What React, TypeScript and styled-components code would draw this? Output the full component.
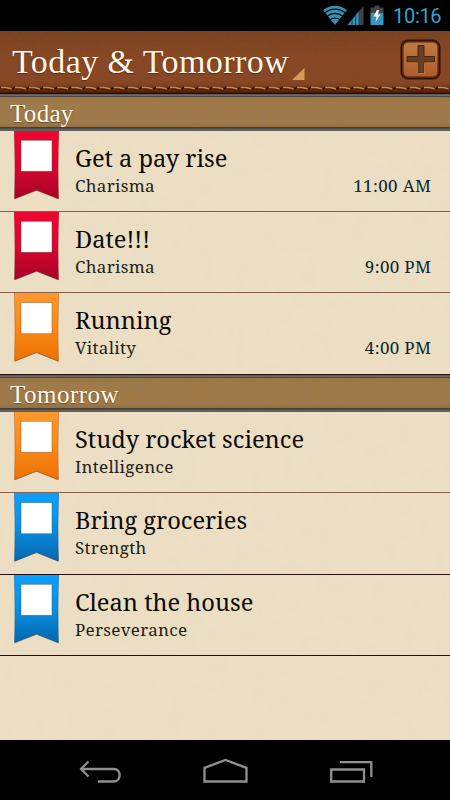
import React from "react";
import styled, { createGlobalStyle } from "styled-components";

const GlobalStyle = createGlobalStyle`
  * { box-sizing: border-box; }
  html, body { margin: 0; background: #000; }
`;

const Screen = styled.div`
  width: 450px;
  height: 800px;
  display: flex;
  flex-direction: column;
  overflow: hidden;
  background: #000;
  font-family: "Droid Serif", "Noto Serif", "Liberation Serif", serif;
`;

const StatusBar = styled.div`
  height: 31px;
  flex: none;
  display: flex;
  justify-content: flex-end;
  background: #000;
`;

const StatusIcons = styled.svg`
  width: 70px;
  height: 31px;
  flex: none;
`;

const Clock = styled.span`
  width: 57px;
  font: 400 20px/32px Roboto, sans-serif;
  letter-spacing: -0.3px;
  color: #35a4cc;
  white-space: nowrap;
`;

const Header = styled.header`
  position: relative;
  height: 63px;
  flex: none;
  background: linear-gradient(#7c4220, #884722 40%, #884622 80%, #703416);
`;

const HeaderContent = styled.div`
  position: relative;
  display: flex;
  align-items: flex-start;
  padding: 0 9px 0 12px;
  height: 54px;
`;

const Title = styled.h1`
  margin: 0;
  padding-top: 1px;
  font: 400 34px/60px "Liberation Serif", serif;
  letter-spacing: 0.42px;
  color: #fff6e8;
  white-space: nowrap;
  text-shadow: 0 1px 1px rgba(50, 15, 0, 0.5);
`;

const SpinnerMark = styled.svg`
  width: 13px;
  height: 13px;
  margin: 37px auto 0 3px;
`;

const AddButton = styled.button`
  width: 41px;
  height: 41px;
  margin-top: 8px;
  padding: 0;
  border: 0;
  background: none;
  svg { display: block; }
`;

const Stitching = styled.svg`
  position: relative;
  display: block;
  width: 450px;
  height: 9px;
`;

const Grain = styled.svg`
  position: absolute;
  inset: 0;
  width: 100%;
  height: 100%;
`;

const SectionBar = styled.div`
  position: relative;
  height: 37px;
  flex: none;
  padding: 3px 0 4px;
  background: linear-gradient(#4b4340, #77706c 1px, #6c6460 2px, #2f2822 3px, #4a3c2b 33px, #42403f 34px, #6f6e6c 36px, #54504a);
`;

const SectionFace = styled.div`
  position: relative;
  height: 30px;
  padding-left: 10px;
  background: linear-gradient(#997544, #a07a46 20%, #a17946 85%, #936f3d);
  overflow: hidden;
`;

const SectionTitle = styled.h2<{ $spacing: number }>`
  position: relative;
  margin: 0;
  font: 400 25px/33px "Liberation Serif", serif;
  letter-spacing: ${p => p.$spacing}px;
  color: #fffaf0;
  text-shadow: 0 1px 1px rgba(50, 30, 0, 0.5);
`;

const List = styled.main`
  position: relative;
  height: 646px;
  flex: none;
  background: #ebdec3;
`;

const Row = styled.article<{ $height: number; $dark?: boolean }>`
  position: relative;
  height: ${p => p.$height}px;
  display: grid;
  grid-template-columns: 61px 1fr auto;
  padding: 0 19px 0 14px;
  border-bottom: 1px solid ${p => (p.$dark ? "#260e10" : "#84604f")};
`;

const RibbonIcon = styled.svg`
  width: 45px;
  height: 70px;
`;

const Copy = styled.div`
  display: flex;
  flex-direction: column;
  color: #0c0a08;
  white-space: nowrap;
`;

const Name = styled.div`
  margin-top: 12px;
  height: 30px;
  font-size: 23.65px;
  line-height: 31px;
`;

const Skill = styled.div`
  height: 26px;
  font-size: 17px;
  line-height: 26px;
  letter-spacing: 0.3px;
  color: #211d19;
`;

const Time = styled.time`
  margin: 42px -0.3px 0 0;
  font-size: 17px;
  line-height: 26px;
  letter-spacing: 0.35px;
  color: #0b2630;
`;

const NavBar = styled.nav`
  height: 60px;
  flex: none;
  display: flex;
  justify-content: space-between;
  padding: 18px 76px 0 78px;
  background: #000;
`;

const NavIcon = styled.svg`
  width: 46px;
  height: 28px;
  fill: none;
  stroke: #909090;
  stroke-width: 2.3;
`;

type Tone = "red" | "orange" | "blue";
const tones: Record<Tone, [string, string, string]> = {
  red: ["#ee0732", "#dc0530", "#a50325"],
  orange: ["#ff982f", "#fb8b1c", "#ec7000"],
  blue: ["#0ba0ff", "#0990e2", "#0367af"],
};

interface TextureProps {
  id: string;
  tint: string;
  fx: number;
  fy: number;
  strength: number;
}

function Texture({ id, tint, fx, fy, strength }: TextureProps) {
  return (
    <Grain aria-hidden="true">
      <filter id={id} x="0" y="0" width="100%" height="100%">
        <feTurbulence type="fractalNoise" baseFrequency={`${fx} ${fy}`} numOctaves={3} seed={4} result="n" />
        <feColorMatrix in="n" type="matrix" values={`0 0 0 0 ${tint} 0 0 0 0 ${tint} 0 0 0 0 ${tint} ${strength} 0 0 0 ${-strength * 0.45}`} />
      </filter>
      <rect width="100%" height="100%" filter={`url(#${id})`} />
    </Grain>
  );
}

function Ribbon({ tone, offset = 0 }: { tone: Tone; offset?: number }) {
  const [a, b, c] = tones[tone];
  return (
    <RibbonIcon viewBox="0 0 45 70">
      <defs>
        <linearGradient id={`ribbon-${tone}`} x1="0" y1="0" x2="0" y2="1">
          <stop stopColor={a} />
          <stop offset=".5" stopColor={b} />
          <stop offset="1" stopColor={c} />
        </linearGradient>
      </defs>
      <g transform={`translate(0 ${offset})`}>
        <path d="M0-1H45Q43.6 34 44.7 68L22.5 59.2L.3 68Q1.4 34 0-1Z" fill={`url(#ribbon-${tone})`} />
        <path d="M44.2 67.8L22.5 59.2L.8 67.8" fill="none" stroke="#4b302a" strokeOpacity=".65" strokeWidth=".8" />
        <path d="M44.6 0Q43.2 34 44.3 67M.4 0Q1.8 34 .7 67" fill="none" stroke="#5b3935" strokeOpacity=".35" strokeWidth=".7" />
        <rect x="7" y="9.3" width="31" height="31" fill="#fff" stroke="#54352e" strokeOpacity=".5" strokeWidth=".7" />
      </g>
    </RibbonIcon>
  );
}

interface Task {
  name: string;
  skill: string;
  time?: string;
  tone: Tone;
  height: number;
  dark?: boolean;
  offset?: number;
}

const today: Task[] = [
  { name: "Get a pay rise", skill: "Charisma", time: "11:00 AM", tone: "red", height: 81 },
  { name: "Date!!!", skill: "Charisma", time: "9:00 PM", tone: "red", height: 81 },
  { name: "Running", skill: "Vitality", time: "4:00 PM", tone: "orange", height: 82, dark: true, offset: 0.4 },
];

const tomorrow: Task[] = [
  { name: "Study rocket science", skill: "Intelligence", tone: "orange", height: 81 },
  { name: "Bring groceries", skill: "Strength", tone: "blue", height: 82, dark: true, offset: 0.4 },
  { name: "Clean the house", skill: "Perseverance", tone: "blue", height: 81, dark: true },
];

function TaskRow({ task }: { task: Task }) {
  return (
    <Row $height={task.height} $dark={task.dark}>
      <Ribbon tone={task.tone} offset={task.offset} />
      <Copy>
        <Name>{task.name}</Name>
        <Skill>{task.skill}</Skill>
      </Copy>
      {task.time && <Time>{task.time}</Time>}
    </Row>
  );
}

function Section({ id, title, spacing, tasks }: { id: string; title: string; spacing: number; tasks: Task[] }) {
  return (
    <section>
      <SectionBar>
        <SectionFace>
          <Texture id={id} tint=".22" fx={0.18} fy={0.5} strength={0.7} />
          <SectionTitle $spacing={spacing}>{title}</SectionTitle>
        </SectionFace>
      </SectionBar>
      {tasks.map(t => <TaskRow key={t.name} task={t} />)}
    </section>
  );
}

export default function App() {
  return (
    <Screen>
      <GlobalStyle />
      <StatusBar>
        <StatusIcons viewBox="-4 0 70 31">
          <path d="M-4 10Q8 1.500 20 10L8 25Z" fill="#3590b5" />
          <path d="M-3 13.200Q8 5 19 13.200M-.500 16.600Q8 10.200 16.500 16.600M2.500 20Q8 16 13.500 20" fill="none" stroke="#000" strokeWidth="1.100" />
          <path d="M36.500 6V25H20.500Z" fill="#424242" />
          <path d="M32.500 10.500V25H20.500Z" fill="#318daf" />
          <path d="M25 18V25M28.500 14V25M32.200 10V25" stroke="#10242b" strokeWidth=".7" />
          <path d="M47.500 5.500H52.500V7.500H56.500V13H43.500V7.500H47.500Z" fill="#444" />
          <path d="M43.500 13H56.500V25H43.500Z" fill="#3995bb" />
          <path d="M50 10L46.500 16.500H49.500L48.500 22L53.500 14.500H50.500L52.500 10Z" fill="#f4fcff" />
        </StatusIcons>
        <Clock>10:16</Clock>
      </StatusBar>
      <Header>
        <Texture id="leather" tint=".12" fx={0.22} fy={0.45} strength={0.5} />
        <HeaderContent>
          <Title>Today &amp; Tomorrow</Title>
          <SpinnerMark viewBox="0 0 13 13"><path d="M12.500 0V12H0Z" fill="#d99a58" /></SpinnerMark>
          <AddButton aria-label="Add task">
            <svg width="41" height="41" viewBox="0 0 41 41">
              <defs>
                <linearGradient id="button" x1="0" y1="0" x2="0" y2="1">
                  <stop stopColor="#bf7a43" /><stop offset="1" stopColor="#ae5c2a" />
                </linearGradient>
              </defs>
              <rect x="1.200" y="1.200" width="38.600" height="38.600" rx="7" fill="#6a3116" stroke="#32130a" strokeWidth="1.500" />
              <rect x="3" y="3" width="35" height="35" rx="5" fill="url(#button)" stroke="#4d210e" strokeWidth="1" />
              <path d="M18 6.500H24V17.500H34.500V23H24V33.500H18V23H7V17.500H18Z" fill="#69401f" stroke="#49240f" strokeWidth="1" />
              <path d="M7 23.800H17.500V34.300H24.500V23.800H35" fill="none" stroke="#d08b50" strokeWidth=".6" />
            </svg>
          </AddButton>
        </HeaderContent>
        <Stitching viewBox="0 0 450 9">
          <defs>
            <linearGradient id="edge" x1="0" y1="0" x2="0" y2="1">
              <stop stopColor="#82401e" stopOpacity="0" /><stop offset=".35" stopColor="#5f290e" />
              <stop offset=".55" stopColor="#6a300f" /><stop offset=".8" stopColor="#4c1e0b" /><stop offset="1" stopColor="#240b05" />
            </linearGradient>
          </defs>
          <rect width="450" height="9" fill="url(#edge)" />
          {Array.from({ length: 33 }, (_, i) => (
            <g key={i} transform={`translate(${-1 + i * 14.1} 0)`}>
              <path d="M-.800 4.600L2 2" stroke="#2b1007" strokeWidth="1.500" />
              <path d="M2.500 2.500Q7 2 12 3.800" fill="none" stroke="#c08a50" strokeWidth="1.500" strokeLinecap="round" />
              <path d="M3 4.200Q7 3.700 12 5.400" fill="none" stroke="#381405" strokeWidth=".8" />
            </g>
          ))}
        </Stitching>
      </Header>
      <List>
        <Texture id="paper" tint=".45" fx={0.06} fy={0.06} strength={0.08} />
        <Section id="cover-a" title="Today" spacing={0.3} tasks={today} />
        <Section id="cover-b" title="Tomorrow" spacing={0.5} tasks={tomorrow} />
      </List>
      <NavBar>
        <NavIcon viewBox="0 0 46 28">
          <path d="M3 11H36C43.500 11 43.500 23.500 36 23.500H20M10.500 3.500L3 11L10.500 18.500" />
        </NavIcon>
        <NavIcon viewBox="0 0 46 28">
          <path d="M1.500 23.500V9.800L22.500 2L43.500 9.800V23.500Z" />
        </NavIcon>
        <NavIcon viewBox="0 0 46 28">
          <path d="M3.200 11.500H36V23.500H3.200ZM12 4.200H43.300V19" />
        </NavIcon>
      </NavBar>
    </Screen>
  );
}
